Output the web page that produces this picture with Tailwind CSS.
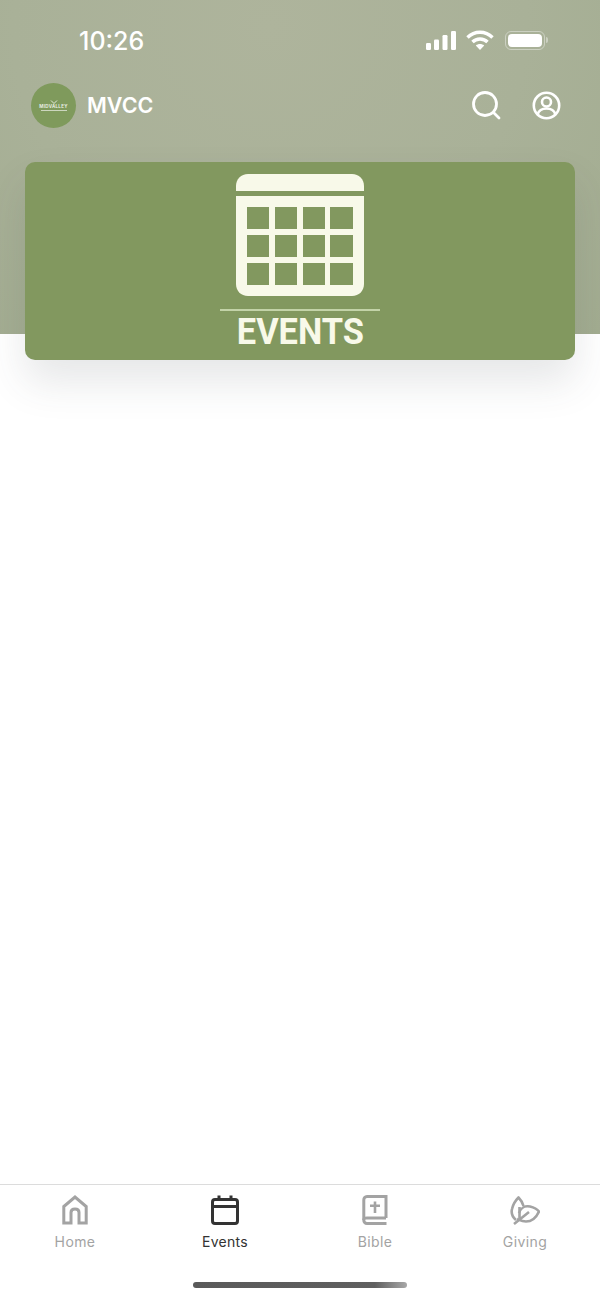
<!DOCTYPE html>
<html lang="en">
<head>
    <meta charset="UTF-8">
    <meta name="viewport" content="width=device-width, initial-scale=1.0">
    <title>MVCC Events</title>
    <script src="https://cdn.jsdelivr.net/npm/@tailwindcss/browser@4"></script>
</head>
<body class="bg-white font-['Inter',sans-serif]">
    <div class="w-[600px] h-[1300px] flex flex-col overflow-hidden bg-white">

        <!-- Header -->
        <div class="h-[334px] shrink-0 bg-[radial-gradient(ellipse_at_45%_8%,#aeb49c_0%,#a9b198_55%,#a2ac90_100%)]">
            <!-- Status bar -->
            <div class="h-[70px] pl-[79px] pr-[52px] pt-[24px] flex justify-between items-start">
                <span class="text-[25px] leading-[34px] font-medium text-white">10:26</span>
                <div class="flex items-center gap-[9px] pt-[6px]">
                    <svg width="32" height="20" viewBox="0 0 32 20" fill="#fff">
                        <rect x="1" y="13" width="5" height="7" rx="1.2"/>
                        <rect x="9" y="9.5" width="5" height="10.5" rx="1.2"/>
                        <rect x="17.5" y="5" width="5" height="15" rx="1.2"/>
                        <rect x="26" y="1" width="5" height="19" rx="1.2"/>
                    </svg>
                    <svg width="28" height="20" viewBox="0 0 28 20" fill="none" stroke="#fff" stroke-width="3.4">
                        <path d="M1.5 7.5C8.5 0.5 19.5 0.5 26.5 7.5"/>
                        <path d="M6.5 12C10.5 8 17.5 8 21.5 12"/>
                        <path d="M14 20l-4.2-4.4c2.4-2 6-2 8.400 0z" fill="#fff" stroke="none"/>
                    </svg>
                    <div class="flex items-center ml-[2px]">
                        <div class="w-[40px] h-[19px] rounded-[6px] border border-white/40 p-[2px]">
                            <div class="w-full h-full rounded-[4px] bg-white"></div>
                        </div>
                        <div class="w-[2px] h-[6px] ml-[1px] rounded-r-sm bg-white/40"></div>
                    </div>
                </div>
            </div>

            <!-- App bar -->
            <div class="h-[72px] pl-[31px] pr-[39px] flex items-center justify-between -mt-[1px]">
                <div class="flex items-center gap-[11px]">
                    <div class="w-[45px] h-[45px] rounded-full bg-[#7f9a5c] flex flex-col items-center justify-center">
                        <svg width="8" height="4" viewBox="0 0 8 4" fill="none" stroke="#fff" stroke-width="0.8">
                            <path d="M1 0.500L4 3.500L7 0.500"/>
                        </svg>
                        <span class="text-[4.500px] leading-[5px] font-semibold text-white/90 tracking-[0.3px]">MIDVALLEY</span>
                        <div class="w-[26px] h-px mt-[1px] bg-white/60"></div>
                    </div>
                    <span class="text-[21.500px] leading-[28px] font-semibold text-white">MVCC</span>
                </div>
                <div class="flex items-center gap-[31px]">
                    <svg width="30" height="30" viewBox="0 0 30 30" fill="none" stroke="#fff" stroke-width="2.8" stroke-linecap="round">
                        <circle cx="14" cy="14" r="11.500"/>
                        <path d="M22.500 22.500L28 28"/>
                    </svg>
                    <svg width="29" height="29" viewBox="0 0 29 29" fill="none" stroke="#fff" stroke-width="2.6">
                        <circle cx="14.500" cy="14.500" r="12.700"/>
                        <circle cx="14.500" cy="11" r="4.500"/>
                        <path d="M5.500 23.500C7 18.800 10.500 17.500 14.500 17.500S22 18.800 23.500 23.500"/>
                    </svg>
                </div>
            </div>

            <!-- Events card -->
            <div class="mx-[25px] mt-[21px] h-[198px] rounded-[10px] bg-[#82985f] shadow-[0_22px_40px_rgba(60,70,80,0.13)] flex flex-col items-center pt-[12px]">
                <svg width="128" height="122" viewBox="0 0 128 122" fill="#f8f9e9" class="shrink-0">
                    <path d="M0 17V12C0 5 5 0 12 0H116C123 0 128 5 128 12V17Z"/>
                    <path fill-rule="evenodd" d="M0 22H128V110C128 117 123 122 116 122H12C5 122 0 117 0 110ZM11 33V55H33V33ZM39 33V55H61V33ZM67 33V55H89V33ZM94 33V55H117V33ZM11 61V83H33V61ZM39 61V83H61V61ZM67 61V83H89V61ZM94 61V83H117V61ZM11 89V111H33V89ZM39 89V111H61V89ZM67 89V111H89V89ZM94 89V111H117V89Z"/>
                </svg>
                <div class="w-[160px] h-[2px] mt-[13px] bg-[#c3d3a8]"></div>
                <span class="text-[37px] leading-[40px] font-['Roboto',sans-serif] font-bold text-[#f8f9e9] mt-[1px] scale-x-[0.93]">EVENTS</span>
            </div>
        </div>

        <div class="flex-1"></div>

        <!-- Tab bar -->
        <div class="h-[116px] shrink-0 border-t border-[#dcdcdc] relative">
            <div class="grid grid-cols-4 pt-[10px]">
                <div class="flex flex-col items-center text-[#a3a3a3]">
                    <svg width="26" height="30" viewBox="0 0 26 30" fill="none" stroke="currentColor" stroke-width="3">
                        <path d="M1.800 28V11.500L13 2L24.200 11.500V28H17V17.500C17 15.500 15.500 14 13 14S9 15.500 9 17.500V28Z"/>
                    </svg>
                    <span class="text-[14px] leading-[18px] mt-[8px] tracking-[0.4px]">Home</span>
                </div>
                <div class="flex flex-col items-center text-[#333333]">
                    <svg width="28" height="30" viewBox="0 0 28 30" fill="none" stroke="currentColor" stroke-width="3">
                        <rect x="1.500" y="4.500" width="25" height="24" rx="2.500"/>
                        <path d="M1.500 11.500H26.500M8 0.500V5M20 0.500V5"/>
                    </svg>
                    <span class="text-[14px] leading-[18px] mt-[8px] tracking-[0.3px]">Events</span>
                </div>
                <div class="flex flex-col items-center text-[#a3a3a3]">
                    <svg width="26" height="30" viewBox="0 0 26 30" fill="none" stroke="currentColor" stroke-width="3">
                        <path d="M24 23V1.500H5C3 1.500 1.800 3 1.800 5V25"/>
                        <path d="M24.500 28.500H5C3 28.500 1.800 27 1.800 25S3 23 5 23H24"/>
                        <path d="M13 6.500V18M8 10.800H18" stroke-width="2.600"/>
                    </svg>
                    <span class="text-[14px] leading-[18px] mt-[8px] tracking-[0.4px]">Bible</span>
                </div>
                <div class="flex flex-col items-center text-[#a3a3a3]">
                    <svg width="30" height="30" viewBox="0 0 30 30" fill="none" stroke="currentColor" stroke-width="2.600" stroke-linejoin="round">
                        <path d="M6 25C2.500 22 1 18 2 14C3 9.500 6 5 8.500 2.500C10.500 4.500 12.500 7.500 13.500 11"/>
                        <path d="M9 18C10.500 13 15 10.500 20 11.500C24 12.500 27 14 29 16.500C26.500 22 22 26.500 16 26.500C12 26.500 9.500 25 7 24"/>
                        <path d="M4 29L19 17M9.500 12V24"/>
                    </svg>
                    <span class="text-[14px] leading-[18px] mt-[8px] tracking-[0.4px]">Giving</span>
                </div>
            </div>
            <!-- Home indicator -->
            <div class="absolute left-[193px] bottom-[12px] w-[214px] h-[6.500px] rounded-full bg-[linear-gradient(90deg,#5a5a5a_0%,#5f5f5f_85%,#a8a8a8_100%)]"></div>
        </div>
    </div>
</body>
</html>
